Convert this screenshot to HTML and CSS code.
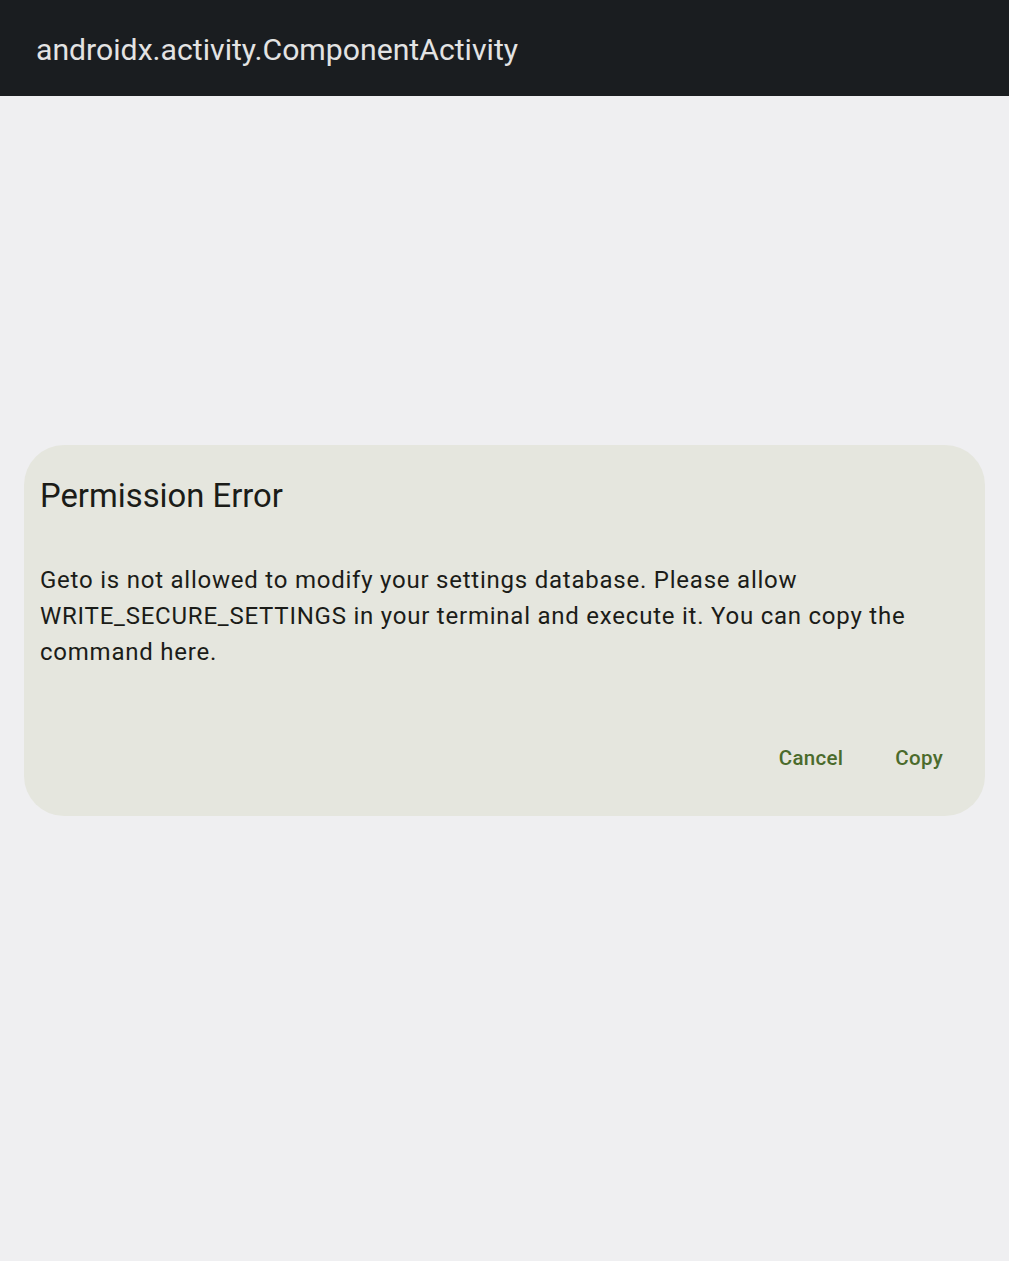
FILE: index.html
```html
<!DOCTYPE html>
<html>
<head>
<meta charset="utf-8">
<link rel="stylesheet" href="styles.css">
</head>
<body>
<header class="appbar">
  <span class="appbar-title">androidx.activity.ComponentActivity</span>
</header>
<main class="content">
  <section class="dialog">
    <h1 class="dialog-title">Permission Error</h1>
    <p class="dialog-text">Geto is not allowed to modify your settings database. Please allow WRITE_SECURE_SETTINGS in your terminal and execute it. You can copy the command here.</p>
    <div class="dialog-actions">
      <button class="btn">Cancel</button>
      <button class="btn">Copy</button>
    </div>
  </section>
</main>
</body>
</html>
```
FILE: styles.css
```css
html, body {
  margin: 0;
  padding: 0;
}
body {
  background: #efeff1;
  font-family: Roboto, "Liberation Sans", sans-serif;
  width: 1009px;
  height: 1261px;
  overflow: hidden;
}
.appbar {
  height: 96px;
  background: #1a1d20;
  display: flex;
  align-items: center;
  padding-left: 36px;
  box-sizing: border-box;
}
.appbar-title {
  color: #e3e3e3;
  font-size: 30.2px;
  margin-top: 2px;
}
.content {
  padding: 349px 24px 0 24px;
}
.dialog {
  background: #e5e6de;
  border-radius: 40px;
  padding: 31px 16px 36px 16px;
  height: 371px;
  box-sizing: border-box;
  display: flex;
  flex-direction: column;
}
.dialog-title {
  margin: 0;
  font-size: 32.8px;
  font-weight: 400;
  line-height: 40px;
  color: #1b1c18;
}
.dialog-text {
  margin: 46px 0 0 0;
  font-size: 24px;
  line-height: 36px;
  letter-spacing: 0.77px;
  color: #1b1c18;
}
.dialog-actions {
  margin-top: auto;
  display: flex;
  justify-content: flex-end;
  gap: 20px;
  padding-right: 10px;
}
.btn {
  background: none;
  border: none;
  font-family: Roboto, "Liberation Sans", sans-serif;
  font-size: 20.5px;
  font-weight: 500;
  letter-spacing: 0.3px;
  color: #4b6b2c;
  padding: 10px 16px;
  line-height: 24px;
}
```
